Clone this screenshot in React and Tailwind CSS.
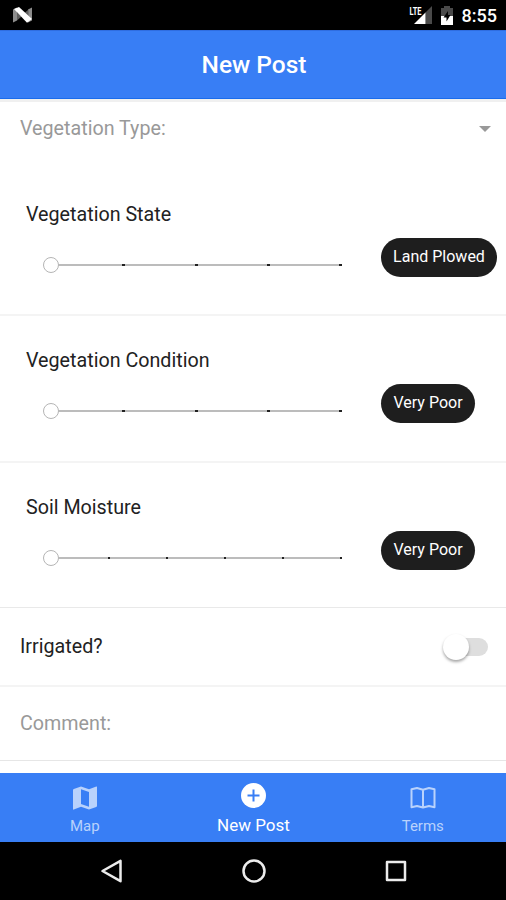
import React, { useState } from 'react';
import clsx from 'clsx';

const sliders = [
  { title: 'Vegetation State', value: 'Land Plowed', steps: 5, row: 'h-[147px] border-b-2 border-[#f4f4f4] pt-[34px]', tick: 'w-[3px]', pill: 'w-[116px]' },
  { title: 'Vegetation Condition', value: 'Very Poor', steps: 5, row: 'h-[147px] border-b-2 border-[#f4f4f4] pt-[33px]', tick: 'w-[3px]', pill: 'w-[94px]' },
  { title: 'Soil Moisture', value: 'Very Poor', steps: 6, row: 'h-[145px] border-b border-[#e9e9e9] pt-[33px]', tick: 'w-[2px]', pill: 'w-[94px]' },
];

const StatusBar = () => (
  <div className="flex h-[30px] shrink-0 items-center justify-between bg-black pl-[13px] pr-[9px]">
    <svg width="20" height="16" viewBox="0 0 20 16">
      <path d="M0 2.500 4 .5v13L0 15.500zM19 .5v13l-4 2V2.500z" fill="#8c8c8c" />
      <path d="M4 5l4.500 4.500L4 13.500zM15.500 11 11 6.500l4.500-4z" fill="#5e5e5e" />
      <path d="M1 2 6 0 19 12 14 15.800z" fill="#fff" />
    </svg>
    <div className="flex items-center">
      <svg width="24" height="20" viewBox="0 0 24 20" className="mr-[8px]">
        <path d="M16.500 7.500 23 1v18h-6.500z" fill="#4a4a4a" />
        <path d="M5 19 16.500 7.500V19z" fill="#fff" />
        <text x="0.500" y="9.500" fontSize="11" fontWeight="700" textLength="12" lengthAdjust="spacingAndGlyphs" fill="#fff">LTE</text>
      </svg>
      <svg width="12" height="19" viewBox="0 0 12 19" className="mr-[9px]">
        <path d="M0 2h3V0h6v2h3v8H0z" fill="#4a4a4a" />
        <path d="M0 10h12v9H0z" fill="#fff" />
        <path d="M7 5 2.500 11.500h3v4l4-6.500H7z" fill="#000" />
      </svg>
      <span className="pt-[2px] text-[18px] font-medium leading-none text-white">8:55</span>
    </div>
  </div>
);

const SliderRow = ({ title, value, steps, row, tick, pill }) => (
  <div className={clsx('shrink-0 pl-[26px]', row)}>
    <div className="text-[19.700px] leading-6 text-[#222]">{title}</div>
    <div className="mt-[11px] flex h-[39px] items-start">
      <div className="relative ml-[18px] mt-[19px] flex h-4 w-[298px] items-center">
        <div className="ml-[6px] flex h-[2px] w-[292px] items-center justify-between bg-[#bcbcbc]">
          {Array.from({ length: steps }, (_, i) => (
            <span key={i} className={clsx('h-[2px] bg-[#222]', tick)}></span>
          ))}
        </div>
        <span className="absolute -left-px top-0 size-4 rounded-full border-[1.500px] border-[#b5b5b5] bg-white"></span>
      </div>
      <div className={clsx('ml-[39px] h-[39px] rounded-full bg-[#1e1e1e] text-center text-[16px] leading-[38px] text-white', pill)}>
        {value}
      </div>
    </div>
  </div>
);

const MapIcon = () => (
  <svg width="24" height="24" viewBox="0 0 24 24" fill="currentColor">
    <path fillRule="evenodd" d="M23.300.500 16 3.300 8 .5.800 3Q0 3.300 0 4v19q0 .9.800.600L8 20.700l8 2.800 7.200-2.500q.8-.3.800-1V1q0-.8-.7-.5zM16 20.700l-8-2.800V3.300l8 2.800z" />
  </svg>
);

const BookIcon = () => (
  <svg width="26" height="22" viewBox="0 0 26 22" fill="none" stroke="currentColor" strokeWidth="2" strokeLinejoin="round">
    <path d="M13 20.500 7 19l-5.500 1.200V2.200L7 1l6 1.800L19 1l5.500 1.200v18L19 19zM13 2.800v17.700" />
  </svg>
);

const App = () => {
  const [irrigated, setIrrigated] = useState(false);

  return (
    <div className="flex h-[900px] w-[506px] flex-col overflow-hidden bg-white font-['Roboto',sans-serif]">
      <StatusBar />
      <header className="flex h-[69px] shrink-0 items-center justify-center border-y border-t-[#2f6de0] border-b-[#1a6cec] bg-[#387ef5] pl-[2px] pt-[2px] text-[24.500px] font-medium text-white">
        New Post
      </header>

      <main className="flex min-h-0 flex-1 flex-col border-t-3 border-[#f0f0f0]">
        <div className="mb-[13px] flex h-[54px] shrink-0 items-center justify-between pl-5 pr-[15px] text-[19.700px] text-[#999]">
          <span>Vegetation Type:</span>
          <svg width="12" height="6" viewBox="0 0 12 6" className="-mt-px">
            <path d="M0 0h12L6 6z" fill="#999" />
          </svg>
        </div>

        {sliders.map((slider) => (
          <SliderRow key={slider.title} {...slider} />
        ))}

        <div className="flex h-[79px] shrink-0 items-center justify-between border-b-2 border-[#f4f4f4] pl-5 pr-[18px] text-[19.700px] text-[#222]">
          <span className="pt-px">Irrigated?</span>
          <button
            onClick={() => setIrrigated(!irrigated)}
            className="relative mt-px h-[18px] w-[40px] rounded-full bg-[#dedede]"
          >
            <span className={clsx('absolute -top-[4px] size-[26px] rounded-full bg-white shadow-[0_2px_3px_rgba(0,0,0,0.35)]', irrigated ? 'right-0' : '-left-[5px]')}></span>
          </button>
        </div>
        <div className="flex h-[74px] shrink-0 items-center border-b border-[#e6e6e6] pl-5 text-[19.700px] text-[#999]">
          Comment:
        </div>
      </main>

      <nav className="grid h-[69px] shrink-0 grid-cols-[168.500px_169px_168.500px] bg-[#387ef5] text-[#b9d2fc]">
        <div className="flex flex-col items-center pl-px pt-[13px]">
          <MapIcon />
          <span className="mt-[6px] text-[15px] leading-5">Map</span>
        </div>
        <div className="flex flex-col items-center pl-px pt-[10px] text-white">
          <svg width="25" height="25" viewBox="0 0 25 25">
            <circle cx="12.500" cy="12.500" r="12.500" fill="#fff" />
            <path d="M12.500 6.500v12M6.500 12.500h12" stroke="#387ef5" strokeWidth="2" />
          </svg>
          <span className="mt-[7px] text-[17px] leading-5">New Post</span>
        </div>
        <div className="flex flex-col items-center pl-[2px] pt-[14px]">
          <BookIcon />
          <span className="mt-[7px] text-[15px] leading-5">Terms</span>
        </div>
      </nav>

      <div className="flex h-[58px] shrink-0 items-center justify-between bg-black pl-[100px] pr-[99px]">
        <svg width="23" height="24" viewBox="0 0 23 24" fill="none" stroke="#ececec" strokeWidth="2.500" strokeLinejoin="round">
          <path d="M2.500 12 20.500 1.800v20.400z" />
        </svg>
        <svg width="24" height="24" viewBox="0 0 24 24" fill="none" stroke="#ececec" strokeWidth="2.500">
          <circle cx="12" cy="12" r="10.500" />
        </svg>
        <svg width="22" height="22" viewBox="0 0 22 22" fill="none" stroke="#ececec" strokeWidth="2.500" strokeLinejoin="round">
          <path d="M2 2h18v18H2z" />
        </svg>
      </div>
    </div>
  );
};

export default App;
